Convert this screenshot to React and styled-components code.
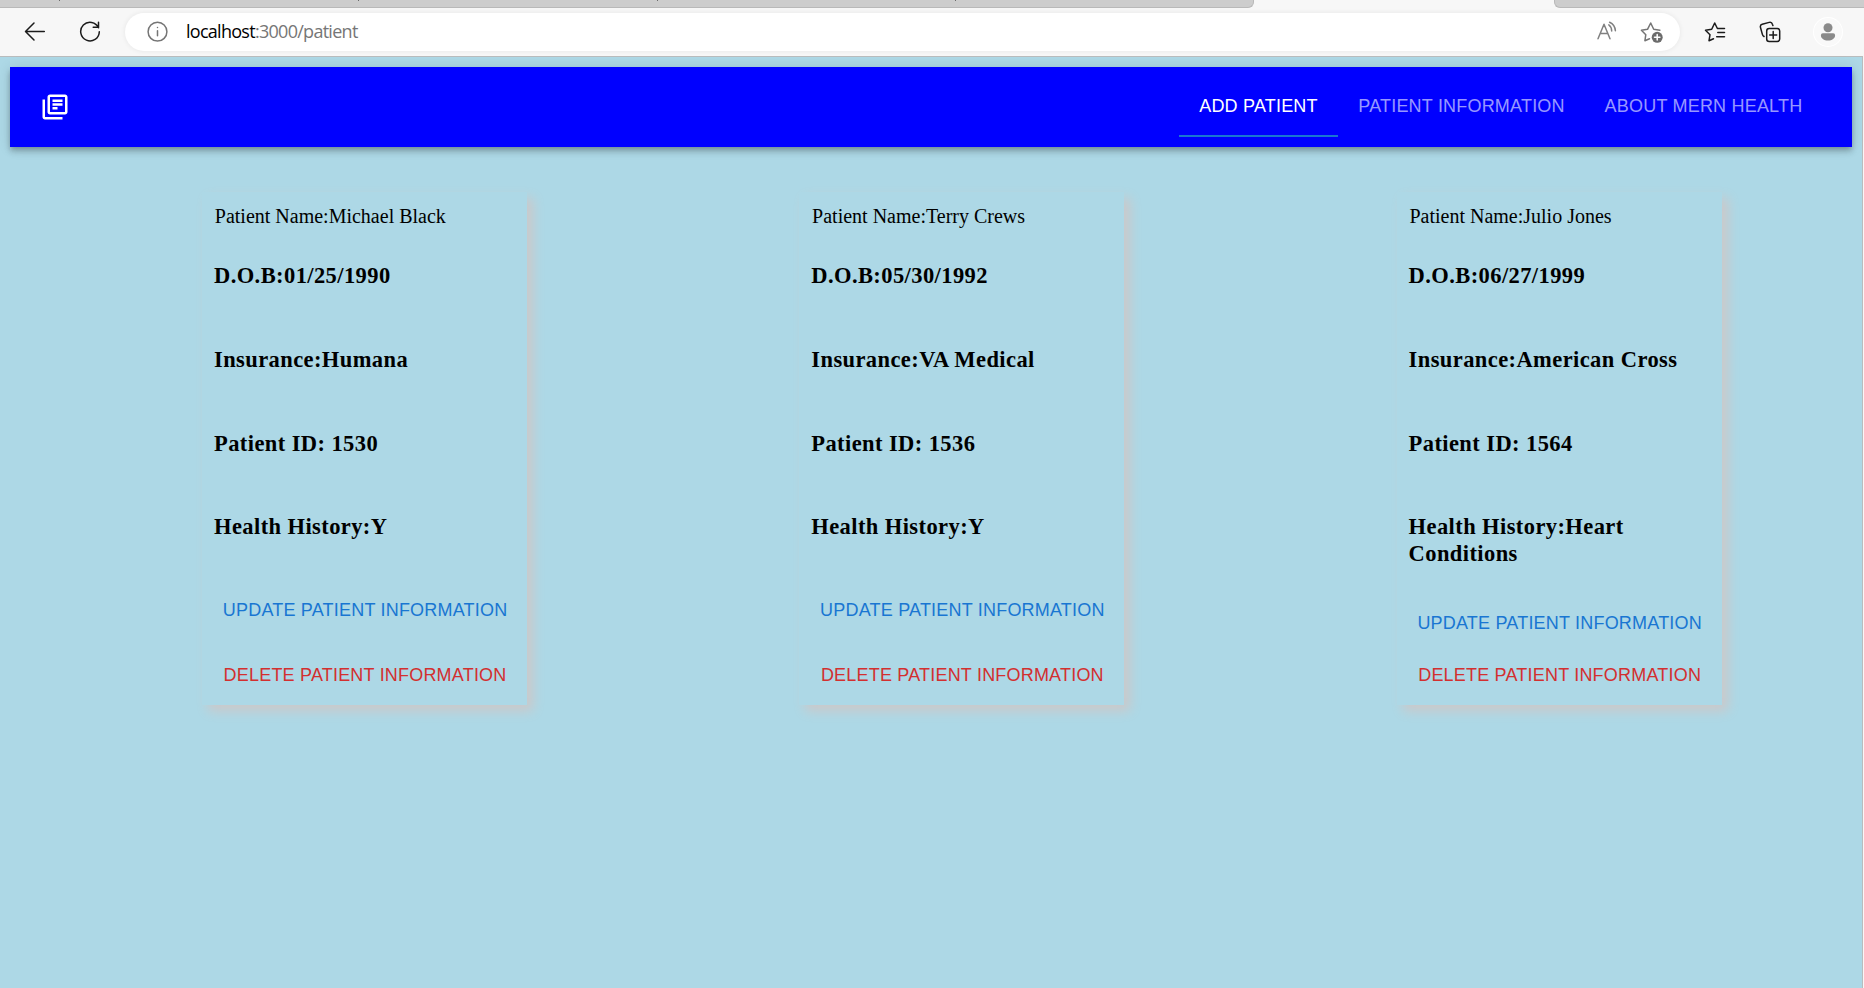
import React from "react";
import styled, { createGlobalStyle } from "styled-components";

const Global = createGlobalStyle`
  *, *::before, *::after { box-sizing: border-box; }
  body { margin: 0; background: lightblue; overflow: hidden; }
`;

const Browser = styled.div`
  display: flex;
  flex-direction: column;
  width: 100%;
  height: 988px;
  background: #f7f7f7;
`;

const TabStrip = styled.div`
  display: flex;
  height: 8px;
  flex: none;
`;

const TabGroup = styled.div`
  width: ${(p) => p.$width};
  flex: ${(p) => (p.$grow ? 1 : "none")};
  display: flex;
  background: #cdcdcd;
  border-bottom: 1px solid #b9b9b9;
  border-right: ${(p) => (p.$edge === "right" ? "1px solid #b9b9b9" : "0")};
  border-left: ${(p) => (p.$edge === "left" ? "1px solid #b9b9b9" : "0")};
  border-radius: ${(p) => (p.$edge === "right" ? "0 0 6px 0" : "0 0 0 6px")};
  margin-right: ${(p) => p.$gap || 0};
`;

const TabTick = styled.span`
  width: 1px;
  height: 1px;
  background: #6b6b6b;
  margin-left: ${(p) => p.$offset}px;
`;

const Toolbar = styled.div`
  display: flex;
  align-items: center;
  height: 48px;
  flex: none;
  padding: 0 22px 0 24px;
`;

const ToolIcon = styled.svg`
  width: ${(p) => p.$size || 22}px;
  height: ${(p) => p.$size || 22}px;
  flex: none;
  display: block;
  fill: none;
  stroke: ${(p) => p.$color || "#1b1b1b"};
  stroke-width: ${(p) => p.$weight || 1.5};
  stroke-linecap: round;
  stroke-linejoin: round;
  margin-left: ${(p) => p.$ml || 0}px;
`;

const AddressBar = styled.div`
  display: flex;
  align-items: center;
  width: 1555px;
  height: 38px;
  margin-left: 24px;
  padding: 0 16px 0 21px;
  border-radius: 19px;
  background: #fff;
  box-shadow: 0 0 4px 1px rgba(0, 0, 0, 0.05);
`;

const Address = styled.div`
  flex: 1;
  margin-left: 18px;
  padding-bottom: 2px;
  font: 18px/24px "Open Sans", "Noto Sans", sans-serif;
  letter-spacing: -0.72px;
  color: #767676;
`;

const Host = styled.span`
  color: #000;
`;

const Avatar = styled.div`
  display: flex;
  align-items: center;
  justify-content: center;
  width: 28px;
  height: 28px;
  margin-left: 33px;
  border-radius: 50%;
  background: #f9f9f9;
  box-shadow: 0 0 0 1px #fff;
`;

const Page = styled.div`
  flex: 1;
  margin-right: 1px;
  background: lightblue;
  border-top: 1px solid #b9bcbd;
  border-right: 1px solid #b9bcbd;
  padding: 10px 10px 0;
`;

const AppBar = styled.header`
  display: flex;
  align-items: center;
  justify-content: space-between;
  height: 80px;
  padding: 0 30px;
  background: #0000ff;
  box-shadow: 0 2.5px 5px -1px rgba(0, 0, 0, 0.2), 0 5px 6px 0 rgba(0, 0, 0, 0.14),
    0 1px 12.5px 0 rgba(0, 0, 0, 0.12);
`;

const Logo = styled.svg`
  width: 30px;
  height: 30px;
  fill: #fff;
`;

const Nav = styled.nav`
  display: flex;
`;

const NavTab = styled.a`
  display: flex;
  align-items: center;
  justify-content: center;
  height: 60px;
  width: ${(p) => p.$width}px;
  padding-bottom: 2px;
  font: 18px/22px "Liberation Sans", Arial, sans-serif;
  letter-spacing: 0.2px;
  white-space: nowrap;
  color: ${(p) => (p.$active ? "#fff" : "rgba(255, 255, 255, 0.6)")};
  box-shadow: ${(p) => (p.$active ? "inset 0 -2px 0 #1976d2" : "none")};
`;

const Patients = styled.main`
  display: grid;
  grid-template-columns: repeat(3, 597.3px);
  padding: 45px 0 0 192px;
`;

const Card = styled.article`
  display: flex;
  flex-direction: column;
  width: 325px;
  height: 513px;
  padding: 11px 12px 10px;
  box-shadow: 6px 6px 11px #ccc8c9;
`;

const Name = styled.p`
  margin: 0 0 33px;
  padding-left: 0.8px;
  font: 20px/26px "Liberation Serif", "Times New Roman", serif;
`;

const Fact = styled.h3`
  margin: 0 0 56.8px;
  font: bold 22.5px/27px "Liberation Serif", "Times New Roman", serif;
  letter-spacing: 0.41px;

  &:last-of-type {
    margin-bottom: 24.5px;
  }
`;

const Action = styled.button`
  border: 0;
  padding: 0 0 0 ${(p) => (p.$danger ? 9.6 : 8.8)}px;
  margin: ${(p) => (p.$danger ? "0" : "auto 0")};
  background: none;
  text-align: left;
  white-space: nowrap;
  font: 18px/40px "Liberation Sans", Arial, sans-serif;
  letter-spacing: 0.2px;
  color: ${(p) => (p.$danger ? "#d32f2f" : "#1976d2")};
`;

const patients = [
  { name: "Michael Black", dob: "01/25/1990", insurance: "Humana", id: "1530", history: "Y" },
  { name: "Terry Crews", dob: "05/30/1992", insurance: "VA Medical", id: "1536", history: "Y" },
  { name: "Julio Jones", dob: "06/27/1999", insurance: "American Cross", id: "1564", history: "Heart Conditions" },
];

function PatientCard({ patient }) {
  return (
    <Card>
      <Name>Patient Name:{patient.name}</Name>
      <Fact>D.O.B:{patient.dob}</Fact>
      <Fact>Insurance:{patient.insurance}</Fact>
      <Fact>Patient ID: {patient.id}</Fact>
      <Fact>Health History:{patient.history}</Fact>
      <Action>UPDATE PATIENT INFORMATION</Action>
      <Action $danger>DELETE PATIENT INFORMATION</Action>
    </Card>
  );
}

export default function App() {
  return (
    <Browser>
      <Global />
      <TabStrip>
        <TabGroup $width="1254px" $edge="right" $gap="300px">
          <TabTick $offset={59} />
          <TabTick $offset={298} />
          <TabTick $offset={298} />
          <TabTick $offset={297} />
        </TabGroup>
        <TabGroup $grow $edge="left" />
      </TabStrip>
      <Toolbar>
        <ToolIcon viewBox="0 0 22 22">
          <path d="M20.300 10.500H1.700M10 2L1.500 10.500L10 19" />
        </ToolIcon>
        <ToolIcon viewBox="0 0 22 22" $ml={33}>
          <path d="M19.500 6.800A9.300 9.300 0 1 0 20.300 10.700M19.500 1.200V6.300H14.200" />
        </ToolIcon>
        <AddressBar>
          <ToolIcon viewBox="0 0 22 22" $color="#757575">
            <circle cx="11.500" cy="10.700" r="9.400" />
            <path d="M11.500 9.800v5M11.500 6.500v.1" />
          </ToolIcon>
          <Address>
            <Host>localhost</Host>:3000/patient
          </Address>
          <ToolIcon viewBox="0 0 22 22" $color="#808080" $weight={1.5}>
            <path d="M2 17.800L8 3.300L14 17.800M4.200 12.500H11.800M12.800 3.800c1.800 1.200 2.800 3.400 2.900 6.200M13.600 1.300c3.300 1.500 5.500 4.500 5.800 8.500" />
          </ToolIcon>
          <ToolIcon viewBox="0 0 24 24" $color="#757575" $size={24} $ml={22}>
            <path d="M9.500 18.700L4.900 20.800l.9-6.100L1.400 10.200l6.100-.9L10.700 3l3 6.300 6.200.9" />
            <circle cx="17.200" cy="17.300" r="5.500" fill="#6b6b6b" stroke="none" />
            <path d="M17.200 14.600v5.400M14.500 17.300h5.400" stroke="#fff" />
          </ToolIcon>
        </AddressBar>
        <ToolIcon viewBox="0 0 22 22" $ml={24}>
          <path d="M9.500 17.700L5 19.800l1-6.100L1.500 9.300l6.200-1L10.700 2l2.700 5.500H20.500M13.800 11.600h6.700M12.700 15.700h7.800" />
        </ToolIcon>
        <ToolIcon viewBox="0 0 22 22" $ml={33}>
          <rect x="7.700" y="7.500" width="13" height="13" rx="2.500" />
          <path d="M14.200 10.500v7M10.700 14h7M5 15.500c-1-.6-1.400-1.300-1.700-2.400L1.500 6.500C1 4.800 1.700 3.800 3.200 3.300l7-1.900c1.600-.4 2.800.4 3.200 1.900l.5 1.300" />
        </ToolIcon>
        <Avatar>
          <ToolIcon viewBox="0 0 20 20" $size={20}>
            <circle cx="10" cy="5.700" r="4.500" fill="#8a8a8a" stroke="none" />
            <path d="M4.900 11.200h10.200a2 2 0 0 1 2 2c0 3.200-3 5.300-7.100 5.300s-7.100-2.100-7.100-5.300a2 2 0 0 1 2-2z" fill="#8a8a8a" stroke="none" />
          </ToolIcon>
        </Avatar>
      </Toolbar>
      <Page>
        <AppBar>
          <Logo viewBox="0 0 24 24">
            <path d="M4 6H2v14c0 1.100.9 2 2 2h14v-2H4V6zm16-4H8c-1.100 0-2 .9-2 2v12c0 1.100.9 2 2 2h12c1.100 0 2-.9 2-2V4c0-1.100-.9-2-2-2zm0 14H8V4h12v12zM10 9h8v2h-8zm0 3h4v2h-4zm0-6h8v2h-8z" />
          </Logo>
          <Nav>
            <NavTab $active $width={159}>ADD PATIENT</NavTab>
            <NavTab $width={247}>PATIENT INFORMATION</NavTab>
            <NavTab $width={237}>ABOUT MERN HEALTH</NavTab>
          </Nav>
        </AppBar>
        <Patients>
          {patients.map((patient) => (
            <PatientCard key={patient.id} patient={patient} />
          ))}
        </Patients>
      </Page>
    </Browser>
  );
}
